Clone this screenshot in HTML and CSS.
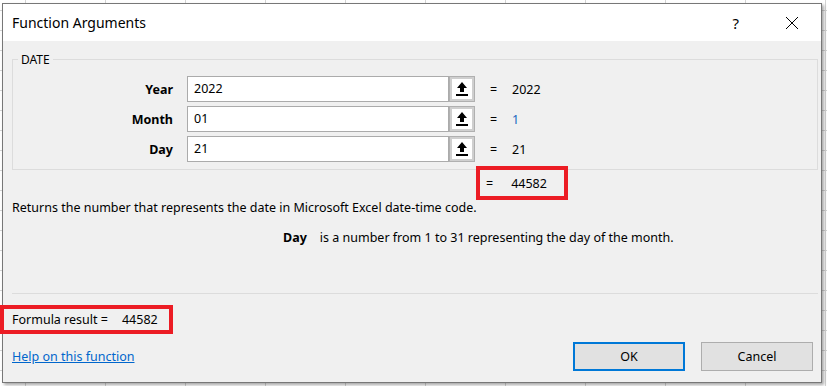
FILE: index.html
```html
<!DOCTYPE html>
<html>
  <head>
    <meta charset="utf-8" />
    <title>Function Arguments</title>
    <link rel="stylesheet" href="styles.css">
  </head>
  <body>
    <div class="dialog">
      <div class="titlebar">
        <span class="title">Function Arguments</span>
        <span class="help">?</span>
        <svg class="close" width="14" height="14" viewBox="0 0 14 14">
          <path d="M1 1 L13 13 M13 1 L1 13" stroke="#000" stroke-width="1" fill="none" />
        </svg>
      </div>
      <div class="content">
        <fieldset class="group">
          <legend>DATE</legend>
          <div class="args">
            <label class="arg-name">Year</label>
            <div class="field"><span class="input">2022</span><span class="picker"><svg width="14" height="16" viewBox="0 0 14 16"><path d="M7 1 L12 7 L9 7 L9 11 L5 11 L5 7 L2 7 Z" fill="#000" /><rect x="1" y="13" width="12" height="2" fill="#000" /></svg></span></div>
            <span class="eq">=</span>
            <span class="val">2022</span>

            <label class="arg-name">Month</label>
            <div class="field"><span class="input">01</span><span class="picker"><svg width="14" height="16" viewBox="0 0 14 16"><path d="M7 1 L12 7 L9 7 L9 11 L5 11 L5 7 L2 7 Z" fill="#000" /><rect x="1" y="13" width="12" height="2" fill="#000" /></svg></span></div>
            <span class="eq">=</span>
            <span class="val num">1</span>

            <label class="arg-name">Day</label>
            <div class="field"><span class="input">21</span><span class="picker"><svg width="14" height="16" viewBox="0 0 14 16"><path d="M7 1 L12 7 L9 7 L9 11 L5 11 L5 7 L2 7 Z" fill="#000" /><rect x="1" y="13" width="12" height="2" fill="#000" /></svg></span></div>
            <span class="eq">=</span>
            <span class="val">21</span>
          </div>
        </fieldset>
        <div class="result-box"><span class="eq">=</span><span>44582</span></div>
        <p class="desc">Returns the number that represents the date in Microsoft Excel date-time code.</p>
        <p class="arg-desc"><b>Day</b><span>is a number from 1 to 31 representing the day of the month.</span></p>
        <hr class="sep" />
        <div class="formula">Formula result =<span>44582</span></div>
        <div class="footer">
          <a href="#" class="help-link">Help on this function</a>
          <div class="buttons">
            <button class="btn default">OK</button>
            <button class="btn">Cancel</button>
          </div>
        </div>
      </div>
    </div>
  </body>
</html>
```

FILE: styles.css
```css
body {
  margin: 0;
  width: 827px;
  height: 386px;
  overflow: hidden;
  background-color: #fff;
  background-image: linear-gradient(to right, #d4d4d4 1px, transparent 1px),
    linear-gradient(to bottom, #d4d4d4 1px, transparent 1px);
  background-size: 80px 20px;
  background-position: 25px 10px;
  font-family: "Noto Sans", "Open Sans", sans-serif;
  font-size: 12px;
  color: #000;
}

.dialog {
  margin: 3px 0 0 2px;
  width: 818px;
  height: 378px;
  border: 1px solid #777;
  background: #f0f0f0;
  box-shadow: 2px 2px 3px rgba(0, 0, 0, 0.35);
  display: flex;
  flex-direction: column;
}

.titlebar {
  height: 37px;
  background: #fff;
  display: flex;
  align-items: center;
  padding: 0 0 0 9px;
}

.title {
  font-size: 14px;
  flex: 1;
}

.help {
  font-size: 15px;
  margin-right: 46px;
}

.close {
  margin-right: 22px;
}

.content {
  padding: 0 3px 0 9px;
  display: flex;
  flex-direction: column;
  flex: 1;
}

.group {
  margin: 10px 0 0 0;
  padding: 0 0 5px 0;
  border: 1px solid #dcdcdc;
  min-width: 0;
}

.group legend {
  margin-left: 5px;
  padding: 0 3px;
  font-size: 12px;
}

.args {
  display: grid;
  grid-template-columns: 173px 290px 22px auto;
  grid-auto-rows: 30px;
  column-gap: 0;
  align-items: center;
  margin-top: 6px;
}

.arg-name {
  font-weight: bold;
  font-size: 12.5px;
  text-align: right;
  padding-right: 13px;
}

.field {
  margin-left: 1px;
  display: flex;
  height: 26px;
}

.input {
  width: 254px;
  border: 1px solid #ababab;
  background: #fff;
  padding-left: 6px;
  line-height: 24px;
  font-size: 12.5px;
}

.picker {
  width: 26px;
  height: 26px;
  box-sizing: border-box;
  border: 3px solid #cfcfcf;
  outline: 1px solid #b0b0b0;
  outline-offset: -1px;
  background: #fff;
  display: flex;
  align-items: center;
  justify-content: center;
}

.eq {
  padding-left: 14px;
  font-size: 12.5px;
}

.val {
  padding-left: 14px;
  font-size: 12.5px;
}

.val.num {
  color: #1a66c0;
}

.result-box {
  margin: -4px 0 0 464px;
  width: 84px;
  height: 26px;
  border: 4px solid #ec1c24;
  display: flex;
  align-items: center;
  font-size: 12.5px;
}

.result-box .eq {
  padding-left: 6px;
  margin-right: 18px;
}

.desc {
  margin: 0;
  font-size: 12.5px;
  line-height: 16px;
}

.arg-desc {
  margin: 14px 0 0 271px;
  font-size: 12.5px;
  line-height: 16px;
}

.arg-desc span {
  margin-left: 13px;
}

.sep {
  margin: 47px 0 0 0;
  border: 0;
  border-top: 1px solid #dcdcdc;
}

.formula {
  margin: 11px 0 0 -12px;
  width: 157px;
  height: 21px;
  border: 4px solid #ec1c24;
  padding-left: 8px;
  display: flex;
  align-items: center;
  font-size: 12.5px;
}

.formula span {
  margin-left: 14px;
}

.footer {
  display: flex;
  align-items: center;
  margin-top: 8px;
}

.help-link {
  color: #0066cc;
  font-size: 12.5px;
  flex: 1;
}

.buttons {
  display: flex;
  gap: 16px;
  margin-right: 5px;
}

.btn {
  width: 112px;
  height: 29px;
  border: 1px solid #adadad;
  background: #e1e1e1;
  font-family: inherit;
  font-size: 12.5px;
  color: #000;
}

.btn.default {
  border: 2px solid #0078d7;
}
```
